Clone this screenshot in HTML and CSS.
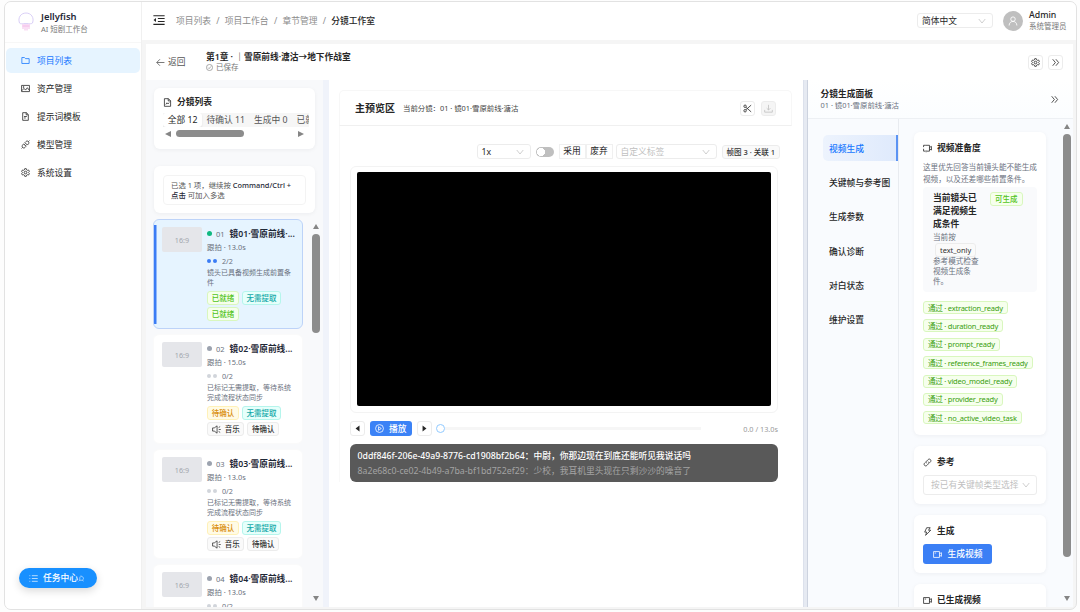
FILE: index.html
```html
<!DOCTYPE html>
<html lang="zh-CN">
<head>
    <meta charset="UTF-8">
    <meta name="viewport" content="width=device-width, initial-scale=1.0">
    <title>Jellyfish - 分镜工作室</title>
    <link rel="stylesheet" href="styles.css">
</head>
<body>

<!-- 图标 -->
<svg class="sprite" xmlns="http://www.w3.org/2000/svg">
    <symbol id="i-folder" viewBox="0 0 16 16"><path d="M1.5 2.7h4.6l2 2h6.4v8.6h-13z"/></symbol>
    <symbol id="i-picture" viewBox="0 0 16 16"><path d="M1 2.5h14v11H1zM1.5 12l3.8-4.2 2.8 3 3.2-4.2 3.5 4.6"/><circle cx="4.6" cy="5.4" r=".8"/></symbol>
    <symbol id="i-file" viewBox="0 0 16 16"><path d="M3 1.2h6.6L13 4.6v10.2H3zM9.2 1.2V5H13M5.4 8h5M5.4 10.6h3"/></symbol>
    <symbol id="i-doc" viewBox="0 0 16 16"><path d="M2.5 1.2h7.2l3.8 3.8v9.8h-11zM9.3 1.2v4h4.2M5 11.5l2-3 2 2 2-2.5"/></symbol>
    <symbol id="i-api" viewBox="0 0 16 16"><path d="M7 4.6l1.8-1.8c1.3-1.3 3.1-1.2 4.3-.1 1.1 1.2 1.2 3 0 4.3L11.4 9zM9 11.4l-1.8 1.8c-1.3 1.3-3.1 1.2-4.3.1-1.1-1.2-1.2-3 0-4.3L4.6 7zM13.2 2.8l1.8-1.8M1 15l1.8-1.8M6 8.2l1.5-1.5M8 10.1l1.5-1.5"/></symbol>
    <symbol id="i-gear" viewBox="0 0 16 16"><path d="M6.6 1.2h2.8l.5 2 1.5.9 2-.6 1.5 2.5-1.5 1.5v1l1.5 1.5-1.5 2.5-2-.6-1.5.9-.5 2H6.6l-.5-2-1.5-.9-2 .6-1.5-2.5 1.5-1.5v-1L1.1 6l1.5-2.5 2 .6 1.5-.9z"/><circle cx="8" cy="8" r="2.3"/></symbol>
    <symbol id="i-fold" viewBox="0 0 16 16"><path d="M.5 2.2h15M6.5 6h9M6.5 10h9M.5 13.8h15"/><path class="solid" d="M4 5.4v5.2L.7 8z"/></symbol>
    <symbol id="i-back" viewBox="0 0 16 16"><path d="M15 8H1.5M7 2.2L1.3 8 7 13.8"/></symbol>
    <symbol id="i-check" viewBox="0 0 16 16"><circle cx="8" cy="8" r="7"/><path d="M4.8 8.2l2.3 2.4 4.2-5"/></symbol>
    <symbol id="i-down" viewBox="0 0 16 16"><path d="M1.5 4l6.5 8 6.5-8"/></symbol>
    <symbol id="i-user" viewBox="0 0 16 16"><circle cx="8" cy="5" r="3.6"/><path d="M1.8 15.2c0-4 2.7-6.5 6.2-6.500s6.2 2.500 6.2 6.500"/></symbol>
    <symbol id="i-right2" viewBox="0 0 16 16"><path d="M3 2.2L7.800 8 3 13.800M8.700 2.200L13.500 8l-4.800 5.800"/></symbol>
    <symbol id="i-scissor" viewBox="0 0 16 16"><path d="M14.5 2L5.4 10M14.5 14L5.4 6"/><circle cx="3.7" cy="4" r="2.2"/><circle cx="3.7" cy="12" r="2.2"/></symbol>
    <symbol id="i-download" viewBox="0 0 16 16"><path d="M8 1.5v9M4.8 7.5L8 10.7l3.2-3.200M1.2 10.500v4h13.600v-4"/></symbol>
    <symbol id="i-play" viewBox="0 0 16 16"><circle cx="8" cy="8" r="7"/><path d="M6.3 4.8v6.4L11.2 8z"/></symbol>
    <symbol id="i-prev" viewBox="0 0 16 16"><path class="solid" d="M12.500 1v14L3.500 8z"/></symbol>
    <symbol id="i-next" viewBox="0 0 16 16"><path class="solid" d="M3.500 1v14L12.500 8z"/></symbol>
    <symbol id="i-sound" viewBox="0 0 16 16"><path d="M1 5.2h3L9 1.5v13l-5-3.7H1zM12 8h3.5M11.8 4.5l2.7-1.7M11.8 11.5l2.7 1.7"/></symbol>
    <symbol id="i-video" viewBox="0 0 16 16"><path d="M1 2.8h10.5v10.4H1zM11.5 6.5L15 4.8v6.4l-3.5-1.7M3 5.4h2.5"/></symbol>
    <symbol id="i-ready" viewBox="0 0 16 16"><path d="M4 2.300h7.500v10.400H7M1 5.500V2.300h3M1 8.500v4.200h3M11.500 6L15 4.300v6.400L11.500 9M5.500 11.200v3.500"/></symbol>
    <symbol id="i-link" viewBox="0 0 16 16"><path d="M6.5 9.5c-1.2-1.2-1.2-2.8 0-4l2.6-2.7c1.2-1.2 3-1.2 4.1 0s1.2 2.9 0 4.1L11.5 8.6M9.5 6.5c1.2 1.2 1.2 2.8 0 4l-2.6 2.7c-1.2 1.2-3 1.2-4.1 0s-1.2-2.9 0-4.1L4.5 7.4"/></symbol>
    <symbol id="i-bolt" viewBox="0 0 16 16"><path d="M6.5 1.3h6.3L9.8 5.8h4L4.6 14.8l2-5.7H3z"/></symbol>
    <symbol id="i-list" viewBox="0 0 16 16"><path d="M5 3h10.5M5 8h10.5M5 13h10.5M.8 3h1.5M.8 8h1.5M.8 13h1.5"/></symbol>
    <symbol id="i-spin" viewBox="0 0 16 16"><path d="M4 6a4.500 4.500 0 1 1 6 6H4l-2.500 2.500M4 6v6M10 12l3 2M5 3l2-2"/></symbol>
    <symbol id="i-logo" viewBox="0 0 16 20"><path d="M1.5 11C-.5 5.5 3 1 8 1s8.5 4.5 6.5 10c-1.5 1.2-3 .6-4 .6H5.500c-1.500 0-2.800.6-4-.6z" stroke="#d5c8f5"/><path d="M5 12v5M7 12v6.500M9 12v6.500M11 12v5M4.500 14h7" stroke="#f3b8e8"/></symbol>
</svg>

<div class="window">
    <aside class="sidebar">
        <div class="brand">
            <svg class="logo"><use href="#i-logo"/></svg>
            <div>
                <div class="brand-name">Jellyfish</div>
                <div class="brand-sub">AI 短剧工作台</div>
            </div>
        </div>
        <nav class="menu">
            <a class="menu-item active"><svg class="icon"><use href="#i-folder"/></svg>项目列表</a>
            <a class="menu-item"><svg class="icon"><use href="#i-picture"/></svg>资产管理</a>
            <a class="menu-item"><svg class="icon"><use href="#i-file"/></svg>提示词模板</a>
            <a class="menu-item"><svg class="icon"><use href="#i-api"/></svg>模型管理</a>
            <a class="menu-item"><svg class="icon"><use href="#i-gear"/></svg>系统设置</a>
        </nav>
        <button class="task-btn"><svg class="icon"><use href="#i-list"/></svg><span>任务中心</span><svg class="spin"><use href="#i-spin"/></svg></button>
    </aside>

    <div class="main">
        <header class="header">
            <svg class="fold"><use href="#i-fold"/></svg>
            <div class="crumbs">
                <span>项目列表</span><i>/</i><span>项目工作台</span><i>/</i><span>章节管理</span><i>/</i><b>分镜工作室</b>
            </div>
            <div class="select lang"><span>简体中文</span><svg class="caret"><use href="#i-down"/></svg></div>
            <div class="avatar"><svg><use href="#i-user"/></svg></div>
            <div class="user">
                <div class="user-name">Admin</div>
                <div class="user-role">系统管理员</div>
            </div>
        </header>

        <div class="studio">
            <div class="toolbar">
                <a class="back"><svg><use href="#i-back"/></svg>返回</a>
                <div class="chapter">
                    <div class="chapter-title">第1章 · ｜雪原前线·溏沽→地下作战室</div>
                    <div class="saved"><svg><use href="#i-check"/></svg>已保存</div>
                </div>
                <button class="sq"><svg><use href="#i-gear"/></svg></button>
                <button class="sq"><svg><use href="#i-right2"/></svg></button>
            </div>

            <div class="columns">
                <!-- 分镜列表 -->
                <section class="shots">
                    <div class="card shots-head">
                        <div class="shots-title"><svg><use href="#i-doc"/></svg>分镜列表</div>
                        <div class="tabs">
                            <span class="tab on">全部 12</span><span class="tab">待确认 11</span><span class="tab">生成中 0</span><span class="tab">已就绪 1</span>
                        </div>
                        <div class="hscroll"><i class="arr left"></i><i class="hthumb"></i><i class="arr right"></i></div>
                    </div>
                    <div class="card tip-card">
                        <div class="tip">已选 1 项，继续按 <b>Command/Ctrl + 点击</b> 可加入多选</div>
                    </div>
                    <div class="shot-scroll">
                        <div class="shot-list">
                            <div class="shot selected">
                                <div class="thumb">16:9</div>
                                <div class="shot-body">
                                    <div class="shot-title"><i class="dot"></i><span class="no">01</span><b>镜01·雪原前线·...</b></div>
                                    <div class="meta">跟拍 · 13.0s</div>
                                    <div class="progress"><i></i><i></i>2/2</div>
                                    <div class="desc">镜头已具备视频生成前置条件</div>
                                    <div class="tags"><span class="tag green">已就绪</span><span class="tag cyan">无需提取</span><span class="tag green">已就绪</span></div>
                                </div>
                            </div>
                            <div class="shot">
                                <div class="thumb">16:9</div>
                                <div class="shot-body">
                                    <div class="shot-title"><i class="dot"></i><span class="no">02</span><b>镜02·雪原前线...</b></div>
                                    <div class="meta">跟拍 · 15.0s</div>
                                    <div class="progress"><i></i><i></i>0/2</div>
                                    <div class="desc">已标记无需提取，等待系统完成流程状态同步</div>
                                    <div class="tags"><span class="tag gold">待确认</span><span class="tag cyan">无需提取</span><span class="tag"><svg><use href="#i-sound"/></svg>音乐</span><span class="tag">待确认</span></div>
                                </div>
                            </div>
                            <div class="shot">
                                <div class="thumb">16:9</div>
                                <div class="shot-body">
                                    <div class="shot-title"><i class="dot"></i><span class="no">03</span><b>镜03·雪原前线...</b></div>
                                    <div class="meta">跟拍 · 13.0s</div>
                                    <div class="progress"><i></i><i></i>0/2</div>
                                    <div class="desc">已标记无需提取，等待系统完成流程状态同步</div>
                                    <div class="tags"><span class="tag gold">待确认</span><span class="tag cyan">无需提取</span><span class="tag"><svg><use href="#i-sound"/></svg>音乐</span><span class="tag">待确认</span></div>
                                </div>
                            </div>
                            <div class="shot">
                                <div class="thumb">16:9</div>
                                <div class="shot-body">
                                    <div class="shot-title"><i class="dot"></i><span class="no">04</span><b>镜04·雪原前线...</b></div>
                                    <div class="meta">跟拍 · 13.0s</div>
                                    <div class="progress"><i></i><i></i>0/2</div>
                                </div>
                            </div>
                        </div>
                        <div class="vscroll"><i class="arr up"></i><i class="vthumb"></i><i class="arr down"></i></div>
                    </div>
                </section>
                <div class="splitter left-split"></div>

                <!-- 主预览区 -->
                <section class="preview">
                    <div class="preview-head">
                        <h2>主预览区</h2>
                        <span class="current">当前分镜：01 · 镜01·雪原前线·溏沽</span>
                        <button class="sq"><svg><use href="#i-scissor"/></svg></button>
                        <button class="sq disabled"><svg><use href="#i-download"/></svg></button>
                    </div>
                    <div class="preview-body">
                        <div class="controls">
                            <div class="select speed"><span>1x</span><svg class="caret"><use href="#i-down"/></svg></div>
                            <div class="switch"></div>
                            <div class="btn-group"><button>采用</button><button>废弃</button></div>
                            <div class="select label"><span>自定义标签</span><svg class="caret"><use href="#i-down"/></svg></div>
                            <span class="tag frames">帧图 3 · 关联 1</span>
                        </div>
                        <div class="stage"><div class="screen"></div></div>
                        <div class="player">
                            <button class="sq"><svg><use href="#i-prev"/></svg></button>
                            <button class="play"><svg><use href="#i-play"/></svg>播放</button>
                            <button class="sq"><svg><use href="#i-next"/></svg></button>
                            <div class="slider"><i class="knob"></i><i class="rail"></i></div>
                            <span class="time">0.0 / 13.0s</span>
                        </div>
                        <div class="subtitles">
                            <p class="now">0ddf846f-206e-49a9-8776-cd1908bf2b64：中尉，你那边现在到底还能听见我说话吗</p>
                            <p>8a2e68c0-ce02-4b49-a7ba-bf1bd752ef29：少校，我耳机里头现在只剩沙沙的噪音了</p>
                        </div>
                    </div>
                </section>
                <div class="splitter"></div>

                <!-- 分镜生成面板 -->
                <section class="panel">
                    <div class="panel-head">
                        <div>
                            <div class="panel-title">分镜生成面板</div>
                            <div class="panel-sub">01 · 镜01·雪原前线·溏沽</div>
                        </div>
                        <svg><use href="#i-right2"/></svg>
                    </div>
                    <div class="panel-main">
                        <nav class="panel-nav">
                            <a class="on">视频生成</a>
                            <a>关键帧与参考图</a>
                            <a>生成参数</a>
                            <a>确认诊断</a>
                            <a>对白状态</a>
                            <a>维护设置</a>
                        </nav>
                        <div class="panel-cards">
                            <div class="card pcard ready-card">
                                <h3><svg><use href="#i-ready"/></svg>视频准备度</h3>
                                <p class="hint">这里优先回答当前镜头能不能生成视频，以及还差哪些前置条件。</p>
                                <div class="ready">
                                    <div class="ready-text">
                                        <div class="ready-title">当前镜头已满足视频生成条件</div>
                                        <div class="ready-desc">当前按<br><span class="tag mode">text_only</span><br>参考模式检查视频生成条件。</div>
                                    </div>
                                    <span class="tag green">可生成</span>
                                </div>
                                <div class="checks">
                                    <span class="tag pass">通过 · extraction_ready</span>
                                    <span class="tag pass">通过 · duration_ready</span>
                                    <span class="tag pass">通过 · prompt_ready</span>
                                    <span class="tag pass">通过 · reference_frames_ready</span>
                                    <span class="tag pass">通过 · video_model_ready</span>
                                    <span class="tag pass">通过 · provider_ready</span>
                                    <span class="tag pass">通过 · no_active_video_task</span>
                                </div>
                            </div>
                            <div class="card pcard small-card">
                                <h3><svg><use href="#i-link"/></svg>参考</h3>
                                <div class="select ref"><span>按已有关键帧类型选择</span><svg class="caret"><use href="#i-down"/></svg></div>
                            </div>
                            <div class="card pcard small-card">
                                <h3><svg><use href="#i-bolt"/></svg>生成</h3>
                                <button class="gen"><svg><use href="#i-video"/></svg>生成视频</button>
                            </div>
                            <div class="card pcard small-card">
                                <h3><svg><use href="#i-video"/></svg>已生成视频</h3>
                            </div>
                        </div>
                        <div class="vscroll panel-scroll"><i class="arr up"></i><i class="vthumb"></i><i class="arr down"></i></div>
                    </div>
                </section>
            </div>
        </div>
    </div>
</div>

</body>
</html>
```
FILE: styles.css
```css
* {
    box-sizing: border-box;
}

body {
    margin: 0;
    width: 1080px;
    height: 612px;
    overflow: hidden;
    background: #fdfdfd;
    font-family: "Noto Sans", "Noto Sans CJK SC", sans-serif;
    font-size: 8.75px;
    line-height: 12px;
    color: #262626;
}

svg {
    width: 9px;
    height: 9px;
    flex: none;
    fill: none;
    stroke: currentColor;
    stroke-width: 1.4;
}

.solid {
    fill: currentColor;
    stroke: none;
}

.sprite {
    display: none;
}

button {
    font: inherit;
    color: inherit;
    padding: 0;
    margin: 0;
}

h2, h3, p {
    margin: 0;
}

b {
    font-weight: 600;
}

.window {
    display: flex;
    width: 1073px;
    height: 609px;
    margin: 1px 0 0 4px;
    border: 1px solid #e2e2e2;
    border-radius: 7px;
    background: #f5f5f5;
    overflow: hidden;
}

/* 侧边栏 */
.sidebar {
    display: flex;
    flex-direction: column;
    width: 137px;
    flex: none;
    background: #fff;
    border-right: 1px solid #f0f0f0;
}

.brand {
    display: flex;
    align-items: center;
    height: 41px;
    padding-left: 13px;
    gap: 7px;
    border-bottom: 1px solid #f7f7f7;
}

.logo {
    width: 16px;
    height: 20px;
    stroke-width: 0.9;
}

.brand-name {
    font-size: 9.4px;
    font-weight: 600;
    line-height: 13px;
    color: #1f2937;
}

.brand-sub {
    font-size: 7.5px;
    line-height: 12px;
    color: #777;
}

.menu {
    display: flex;
    flex-direction: column;
    gap: 3px;
    padding: 5px 1px 0;
}

.menu-item {
    display: flex;
    align-items: center;
    gap: 7px;
    height: 25px;
    padding-left: 15px;
    border-radius: 5px;
}

.menu-item.active {
    background: #e6f4ff;
    color: #1677ff;
}

.task-btn {
    display: flex;
    align-items: center;
    width: 78px;
    height: 20px;
    margin: auto 0 21px 14px;
    padding-left: 10px;
    border: none;
    border-radius: 10px;
    background: #1890ff;
    color: #fff;
    font-weight: 500;
    box-shadow: 0 3px 8px rgba(0, 0, 0, 0.15);
}

.task-btn .icon {
    margin-right: 5px;
    stroke-width: 1.2;
}

.spin {
    width: 7px;
    height: 7px;
    stroke-width: 1.2;
}

/* 顶栏 */
.main {
    flex: 1;
    min-width: 0;
}

.header {
    display: flex;
    align-items: center;
    height: 38px;
    padding: 0 9px 1px 11px;
    background: #fff;
}

.fold {
    width: 12px;
    height: 12px;
    margin-top: -2px;
}

.crumbs {
    flex: 1;
    display: flex;
    margin-left: 11px;
    color: #8c8c8c;
}

.crumbs i {
    font-style: normal;
    margin: 0 5.3px;
}

.crumbs b {
    color: #262626;
    font-weight: 500;
}

.select {
    display: flex;
    align-items: center;
    justify-content: space-between;
    height: 15px;
    padding: 0 6px 0 4px;
    border: 1px solid #ececec;
    border-radius: 3px;
    background: #fff;
}

.caret {
    width: 8px;
    height: 8px;
    color: #bbb;
}

.lang {
    width: 76px;
    margin-right: 10px;
}

.avatar {
    display: flex;
    align-items: center;
    justify-content: center;
    width: 20px;
    height: 20px;
    margin-right: 6px;
    border-radius: 50%;
    background: #bfbfbf;
    color: #fff;
}

.avatar svg {
    width: 10px;
    height: 10px;
}

.user {
    width: 38px;
    padding-top: 1px;
    white-space: nowrap;
}

.user-name {
    font-weight: 500;
    line-height: 11px;
}

.user-role {
    font-size: 7.5px;
    line-height: 11px;
    color: #777;
}

/* 工作室 */
.studio {
    margin: 4px 3px 0 4px;
}

.toolbar {
    display: flex;
    align-items: center;
    height: 36px;
    padding: 0 10px;
    gap: 5px;
    background: #fff;
}

.back {
    display: flex;
    align-items: center;
    gap: 3px;
    width: 45px;
    color: #555;
}

.chapter {
    flex: 1;
    margin-top: -1px;
}

.chapter-title {
    font-size: 8.7px;
    font-weight: 600;
    line-height: 11px;
}

.saved {
    display: flex;
    align-items: center;
    gap: 3px;
    font-size: 7.5px;
    line-height: 9px;
    color: #777;
}

.saved svg {
    width: 7px;
    height: 7px;
}

.sq {
    display: flex;
    align-items: center;
    justify-content: center;
    width: 15px;
    height: 15px;
    border: 1px solid #ececec;
    border-radius: 3px;
    background: #fff;
}

.sq.disabled {
    background: #f5f5f5;
    color: #bfbfbf;
}

.columns {
    display: flex;
    height: 527px;
    overflow: hidden;
}

.splitter {
    width: 5px;
    flex: none;
    background: #e6eaf2;
    border-right: 1px solid #cdd3df;
    border-left: 1px solid #dce1ec;
}

.left-split {
    width: 6px;
    background: #f0f3fa;
    border: none;
}

.card {
    background: #fff;
    border-radius: 6px;
    box-shadow: 0 1px 4px rgba(15, 23, 42, 0.05);
}

/* 左列 */
.shots {
    display: flex;
    flex-direction: column;
    width: 177px;
    flex: none;
    padding: 8px 0 0 7px;
    background: #f8f9fb;
}

.shots-head {
    width: 161px;
    height: 61px;
    margin-left: 1px;
    padding: 8px 6px 0 9px;
}

.shots-title {
    display: flex;
    align-items: center;
    gap: 5px;
    font-weight: 600;
}

.tabs {
    display: flex;
    height: 14px;
    margin-top: 5px;
    background: #f6f6f6;
    overflow: hidden;
    white-space: nowrap;
    color: #555;
}

.tab {
    flex: none;
    padding: 1px 4.3px 0 4.7px;
}

.tab.on {
    background: #fff;
    border-radius: 3px;
    box-shadow: 0 1px 2px rgba(0, 0, 0, 0.1);
    color: #262626;
}

.hscroll {
    display: flex;
    align-items: center;
    height: 13px;
    padding: 0 5px 0 2px;
    gap: 5px;
}

.hthumb {
    width: 68px;
    height: 7px;
    margin-right: auto;
    border-radius: 4px;
    background: #8c8c8c;
}

.arr {
    width: 0;
    height: 0;
    border: 3.5px solid transparent;
}

.arr.left {
    border-left: none;
    border-right: 6px solid #858585;
}

.arr.right {
    border-right: none;
    border-left: 6px solid #858585;
}

.arr.up {
    border-top: none;
    border-bottom: 5px solid #858585;
}

.arr.down {
    border-bottom: none;
    border-top: 5px solid #858585;
}

.tip-card {
    width: 161px;
    height: 47px;
    margin: 17px 0 6px 1px;
    padding: 9px;
}

.tip {
    height: 30px;
    padding: 4px 7px;
    border: 1px solid #f3f3f3;
    border-radius: 4px;
    font-size: 7.4px;
    line-height: 10px;
    color: #555;
}

.tip b {
    color: #1f2937;
    font-weight: 500;
}

.shot-scroll {
    display: flex;
    flex: 1;
    min-height: 0;
}

.shot-list {
    display: flex;
    flex-direction: column;
    gap: 5px;
    width: 150px;
    overflow: hidden;
}

.shot {
    display: flex;
    flex: none;
    gap: 5px;
    height: 110px;
    padding: 7px 4px 0 8px;
    border: 1px solid #fafafa;
    border-radius: 6px;
    background: #fff;
}

.shot.selected {
    background: linear-gradient(#3b7cf5, #3b7cf5) 0 50% / 2.5px 99px no-repeat, #e6f4ff;
    border-color: #bdd3f8;
}

.thumb {
    display: flex;
    align-items: center;
    justify-content: center;
    width: 40px;
    height: 25px;
    flex: none;
    border-radius: 2px;
    background: #e5e6ea;
    font-size: 7.2px;
    color: #a3a7ae;
}

.shot-body {
    flex: 1;
    min-width: 0;
    font-size: 7.5px;
    color: #6b7280;
}

.shot-title {
    display: flex;
    align-items: center;
    height: 13px;
    white-space: nowrap;
}

.shot-title b {
    font-size: 8.7px;
    color: #1f2937;
}

.dot {
    width: 5px;
    height: 5px;
    margin-right: 4px;
    border-radius: 50%;
    background: #9ca3af;
}

.selected .dot {
    background: #10b981;
}

.no {
    width: 13.5px;
}

.meta {
    height: 14px;
    line-height: 15px;
    font-size: 7.4px;
}

.progress {
    display: flex;
    align-items: center;
    height: 13px;
    gap: 2px;
    font-size: 7.2px;
}

.progress i {
    width: 4px;
    height: 4px;
    border-radius: 50%;
    background: #d1d5db;
}

.progress i + i {
    margin-right: 3px;
}

.selected .progress i {
    background: #3b7cf5;
}

.desc {
    width: 86px;
    height: 22px;
    padding-top: 1px;
    font-size: 7px;
    line-height: 10.3px;
}

.tags {
    display: flex;
    flex-wrap: wrap;
    gap: 2px 3px;
    margin-top: 2px;
}

.tag {
    display: inline-flex;
    align-items: center;
    gap: 4px;
    height: 14px;
    padding: 0 4px;
    border: 1px solid #ececec;
    border-radius: 3px;
    background: #fafafa;
    font-size: 7.5px;
    font-weight: 500;
    line-height: 12px;
    color: #333;
    white-space: nowrap;
}

.tags .tag {
    padding: 0 3.7px;
}

.tag.green {
    color: #52c41a;
    background: #f6ffed;
    border-color: #d9f7be;
}

.tag.cyan {
    color: #13a8a8;
    background: #e6fffb;
    border-color: #b5f5ec;
}

.tag.gold {
    color: #d98e0b;
    background: #fffbe6;
    border-color: #fff1b8;
}

.vscroll {
    display: flex;
    flex-direction: column;
    align-items: center;
    gap: 5px;
    width: 10px;
    margin-left: 8px;
    padding: 5px 0 6px;
}

.vthumb {
    width: 8px;
    height: 99px;
    margin-bottom: auto;
    border-radius: 4px;
    background: #8c8c8c;
}

/* 中间预览 */
.preview {
    flex: 1;
    min-width: 0;
    padding: 10px 11px 0 10px;
    background: #fff;
}

.preview-head {
    display: flex;
    align-items: center;
    height: 36px;
    padding: 0 15px;
    border: 1px solid #f7f7f7;
    border-bottom-color: #f0f0f0;
    border-radius: 5px 5px 0 0;
}

h2 {
    font-size: 10px;
    font-weight: 600;
}

.current {
    flex: 1;
    margin-left: 8px;
    font-size: 7.4px;
    color: #444;
}

.preview-head .sq + .sq {
    margin-left: 6px;
}

.preview-body {
    padding: 18px 14px 0 10px;
    border-left: 1px solid #f9f9f9;
}

.controls {
    display: flex;
    align-items: center;
    justify-content: flex-end;
    height: 15px;
    margin-right: -2px;
}

.speed {
    width: 54px;
}

.switch {
    width: 18px;
    height: 10px;
    margin: 1px 5px 0;
    border-radius: 5px;
    background: radial-gradient(circle at 5px 5px, #fff 3.8px, #bfbfbf 4.3px);
}

.btn-group {
    display: flex;
}

.btn-group button {
    width: 27px;
    height: 15px;
    border: 1px solid #f0f0f0;
    background: #fff;
    line-height: 13px;
}

.label {
    width: 101px;
    margin: 0 5px 0 3px;
}

.label span,
.ref span {
    color: #bfbfbf;
}

.frames {
    padding: 0 4px;
}

.stage {
    height: 247px;
    margin-top: 7px;
    padding: 5px 6px 5px 5.5px;
    border: 1px solid #f3f3f3;
    border-radius: 6px;
}

.screen {
    height: 234px;
    border-radius: 2px;
    background: #000;
}

.player {
    display: flex;
    align-items: center;
    gap: 5px;
    height: 15px;
    margin-top: 8px;
}

.play {
    display: flex;
    align-items: center;
    justify-content: center;
    gap: 5px;
    width: 41.5px;
    height: 15px;
    border: none;
    border-radius: 3px;
    background: #3b82f6;
    color: #fff;
    font-weight: 500;
}

.player .sq svg {
    width: 7px;
    height: 7px;
}

.slider {
    display: flex;
    align-items: center;
    flex: 1;
    margin-left: -1px;
}

.knob {
    width: 9px;
    height: 9px;
    border: 1.5px solid #91caff;
    border-radius: 50%;
}

.rail {
    width: 256px;
    height: 3px;
    background: #f6f6f6;
}

.time {
    font-size: 7.3px;
    color: #999;
}

.subtitles {
    height: 38px;
    margin-top: 8px;
    padding: 5px 7.5px;
    border-radius: 6px;
    background: #595959;
    line-height: 15px;
    color: #a3a3a3;
    white-space: nowrap;
}

.now {
    color: #fff;
    font-weight: 500;
}

/* 右侧面板 */
.panel {
    display: flex;
    flex-direction: column;
    width: 265px;
    flex: none;
    background: #f9fbfe;
}

.panel-head {
    display: flex;
    align-items: center;
    justify-content: space-between;
    height: 39px;
    padding: 0 14px 0 12.5px;
    border-bottom: 1px solid #edf0f4;
    background: linear-gradient(#fff, #fbfdff);
}

.panel-title {
    font-weight: 600;
    line-height: 12px;
}

.panel-sub {
    font-size: 7.4px;
    line-height: 10px;
    color: #6b7280;
}

.panel-main {
    display: flex;
    flex: 1;
    min-height: 0;
}

.panel-nav {
    display: flex;
    flex-direction: column;
    gap: 8.2px;
    width: 91px;
    flex: none;
    padding: 16px 0 0 15px;
    border-right: 1px solid #e8ebf0;
}

.panel-nav a {
    height: 26px;
    padding: 1px 0 0 6px;
    line-height: 26px;
    font-weight: 500;
    white-space: nowrap;
}

.panel-nav .on {
    border-radius: 5px 0 0 5px;
    border-right: 2px solid #5b93f3;
    background: linear-gradient(90deg, #edf3fd, #dfeafc);
    color: #1677ff;
}

.panel-cards {
    display: flex;
    flex-direction: column;
    gap: 11px;
    width: 132px;
    margin-left: 15px;
    padding-top: 13px;
}

.pcard {
    flex: none;
    padding: 10px 9px 9px;
}

.ready-card {
    height: 303px;
}

.small-card {
    height: 58px;
}

h3 {
    display: flex;
    align-items: center;
    gap: 5px;
    font-size: 8.75px;
    font-weight: 600;
    line-height: 13px;
}

.hint {
    width: 116px;
    margin-top: 7px;
    font-size: 7.6px;
    line-height: 11.5px;
    color: #6b7280;
}

.ready {
    display: flex;
    align-items: flex-start;
    gap: 11px;
    height: 105px;
    margin-top: 2px;
    padding: 5px 10px;
    border-radius: 4px;
    background: #f9fafc;
}

.ready-text {
    width: 46px;
    flex: none;
}

.ready-title {
    font-weight: 600;
    line-height: 12.8px;
}

.ready-desc {
    margin-top: 2px;
    font-size: 7.6px;
    line-height: 10.3px;
    color: #6b7280;
}

.mode {
    margin: 0 0 -1px 2px;
    font-size: 7.4px;
    font-weight: 400;
    vertical-align: middle;
}

.checks {
    display: flex;
    flex-direction: column;
    align-items: flex-start;
    gap: 5.4px;
    margin-top: 9px;
}

.pass {
    height: 13px;
    color: #389e0d;
    background: #f6ffed;
    border-color: #d9f7be;
    font-weight: 400;
    letter-spacing: -0.22px;
}

.ref {
    height: 20px;
    margin-top: 6px;
    padding-left: 7px;
}

.gen {
    display: flex;
    align-items: center;
    justify-content: center;
    gap: 6px;
    width: 69px;
    height: 20px;
    margin-top: 6px;
    border: none;
    border-radius: 3px;
    background: #3b7ff5;
    color: #fff;
    font-weight: 500;
}

.panel-scroll {
    margin-left: 16px;
}

.panel-scroll .vthumb {
    height: 423px;
}
```
